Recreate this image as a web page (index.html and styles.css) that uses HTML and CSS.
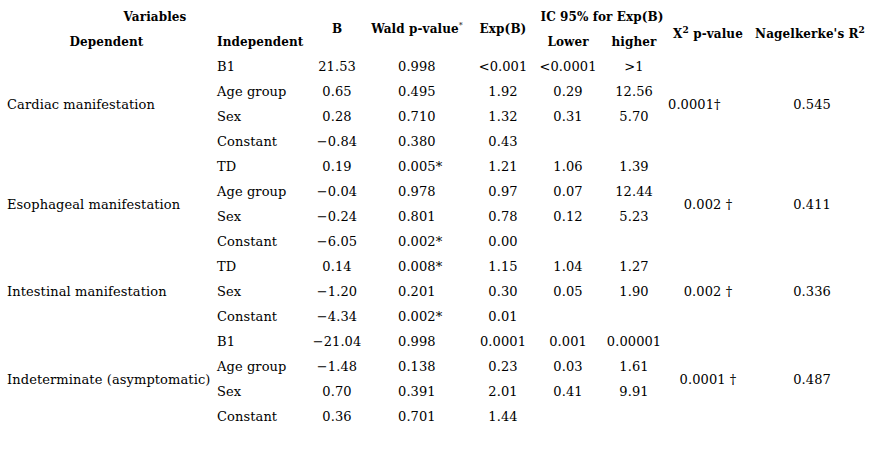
FILE: index.html
```html
<!DOCTYPE html>
<html>
<head>
<meta charset="utf-8">
<link rel="stylesheet" href="styles.css">
</head>
<body>
<table class="tbl">
  <colgroup>
    <col class="c-dep"><col class="c-ind"><col class="c-b"><col class="c-wald"><col class="c-exp"><col class="c-low"><col class="c-high"><col class="c-x2"><col class="c-r2">
  </colgroup>
  <thead>
    <tr>
      <th colspan="2" class="var">Variables</th>
      <th rowspan="2">B</th>
      <th rowspan="2">Wald p-value<sup class="star">*</sup></th>
      <th rowspan="2">Exp(B)</th>
      <th colspan="2">IC 95% for Exp(B)</th>
      <th rowspan="2" class="x2h">X<sup>2</sup> p-value</th>
      <th rowspan="2" class="r2h">Nagelkerke's R<sup>2</sup></th>
    </tr>
    <tr>
      <th>Dependent</th>
      <th class="left">Independent</th>
      <th>Lower</th>
      <th>higher</th>
    </tr>
  </thead>
  <tbody>
    <tr><td rowspan="4" class="dep">Cardiac manifestation</td><td class="ind">B1</td><td>21.53</td><td class="wald">0.998</td><td>&lt;0.001</td><td>&lt;0.0001</td><td>&gt;1</td><td rowspan="4" class="x2 shift">0.0001†</td><td rowspan="4" class="r2">0.545</td></tr>
    <tr><td class="ind">Age group</td><td>0.65</td><td class="wald">0.495</td><td>1.92</td><td>0.29</td><td>12.56</td></tr>
    <tr><td class="ind">Sex</td><td>0.28</td><td class="wald">0.710</td><td>1.32</td><td>0.31</td><td>5.70</td></tr>
    <tr><td class="ind">Constant</td><td>−0.84</td><td class="wald">0.380</td><td>0.43</td><td></td><td></td></tr>

    <tr><td rowspan="4" class="dep">Esophageal manifestation</td><td class="ind">TD</td><td>0.19</td><td class="wald">0.005*</td><td>1.21</td><td>1.06</td><td>1.39</td><td rowspan="4" class="x2">0.002 †</td><td rowspan="4" class="r2">0.411</td></tr>
    <tr><td class="ind">Age group</td><td>−0.04</td><td class="wald">0.978</td><td>0.97</td><td>0.07</td><td>12.44</td></tr>
    <tr><td class="ind">Sex</td><td>−0.24</td><td class="wald">0.801</td><td>0.78</td><td>0.12</td><td>5.23</td></tr>
    <tr><td class="ind">Constant</td><td>−6.05</td><td class="wald">0.002*</td><td>0.00</td><td></td><td></td></tr>

    <tr><td rowspan="3" class="dep">Intestinal manifestation</td><td class="ind">TD</td><td>0.14</td><td class="wald">0.008*</td><td>1.15</td><td>1.04</td><td>1.27</td><td rowspan="3" class="x2">0.002 †</td><td rowspan="3" class="r2">0.336</td></tr>
    <tr><td class="ind">Sex</td><td>−1.20</td><td class="wald">0.201</td><td>0.30</td><td>0.05</td><td>1.90</td></tr>
    <tr><td class="ind">Constant</td><td>−4.34</td><td class="wald">0.002*</td><td>0.01</td><td></td><td></td></tr>

    <tr><td rowspan="4" class="dep">Indeterminate (asymptomatic)</td><td class="ind">B1</td><td>−21.04</td><td class="wald">0.998</td><td>0.0001</td><td>0.001</td><td>0.00001</td><td rowspan="4" class="x2">0.0001 †</td><td rowspan="4" class="r2">0.487</td></tr>
    <tr><td class="ind">Age group</td><td>−1.48</td><td class="wald">0.138</td><td>0.23</td><td>0.03</td><td>1.61</td></tr>
    <tr><td class="ind">Sex</td><td>0.70</td><td class="wald">0.391</td><td>2.01</td><td>0.41</td><td>9.91</td></tr>
    <tr><td class="ind">Constant</td><td>0.36</td><td class="wald">0.701</td><td>1.44</td><td></td><td></td></tr>
  </tbody>
</table>
</body>
</html>
```

FILE: styles.css
```css
html, body {
  margin: 0;
  padding: 0;
  background: #fff;
}
body {
  padding-top: 4px;
  font-family: "DejaVu Serif", "Liberation Serif", serif;
  font-size: 13px;
  letter-spacing: 0.1px;
  color: #000;
}
.tbl {
  border-collapse: collapse;
  table-layout: fixed;
  width: 876px;
}
.c-dep { width: 213px; }
.c-ind { width: 97px; }
.c-b { width: 54px; }
.c-wald { width: 106px; }
.c-exp { width: 66px; }
.c-low { width: 64px; }
.c-high { width: 68px; }
.c-x2 { width: 80px; }
.c-r2 { width: 128px; }
.tbl th, .tbl td {
  padding: 0;
  height: 25px;
  text-align: center;
  vertical-align: middle;
  white-space: nowrap;
  font-weight: normal;
}
.tbl th {
  font-weight: bold;
  font-size: 12px;
  letter-spacing: 0.1px;
}
.tbl th.left, .tbl td.ind {
  text-align: left;
  padding-left: 4px;
}
.tbl td.dep {
  text-align: left;
  padding-left: 7px;
}
.tbl td.wald {
  text-align: left;
  padding-left: 34px;
}
.tbl sup {
  font-size: 9px;
  line-height: 0;
}
.tbl sup.star {
  font-weight: normal;
  font-size: 8px;
}
.tbl td.shift {
  text-align: left;
}
.tbl th.r2h {
  padding-right: 4px;
}
.tbl th.x2h, .tbl th.r2h {
  padding-top: 10px;
}
```
